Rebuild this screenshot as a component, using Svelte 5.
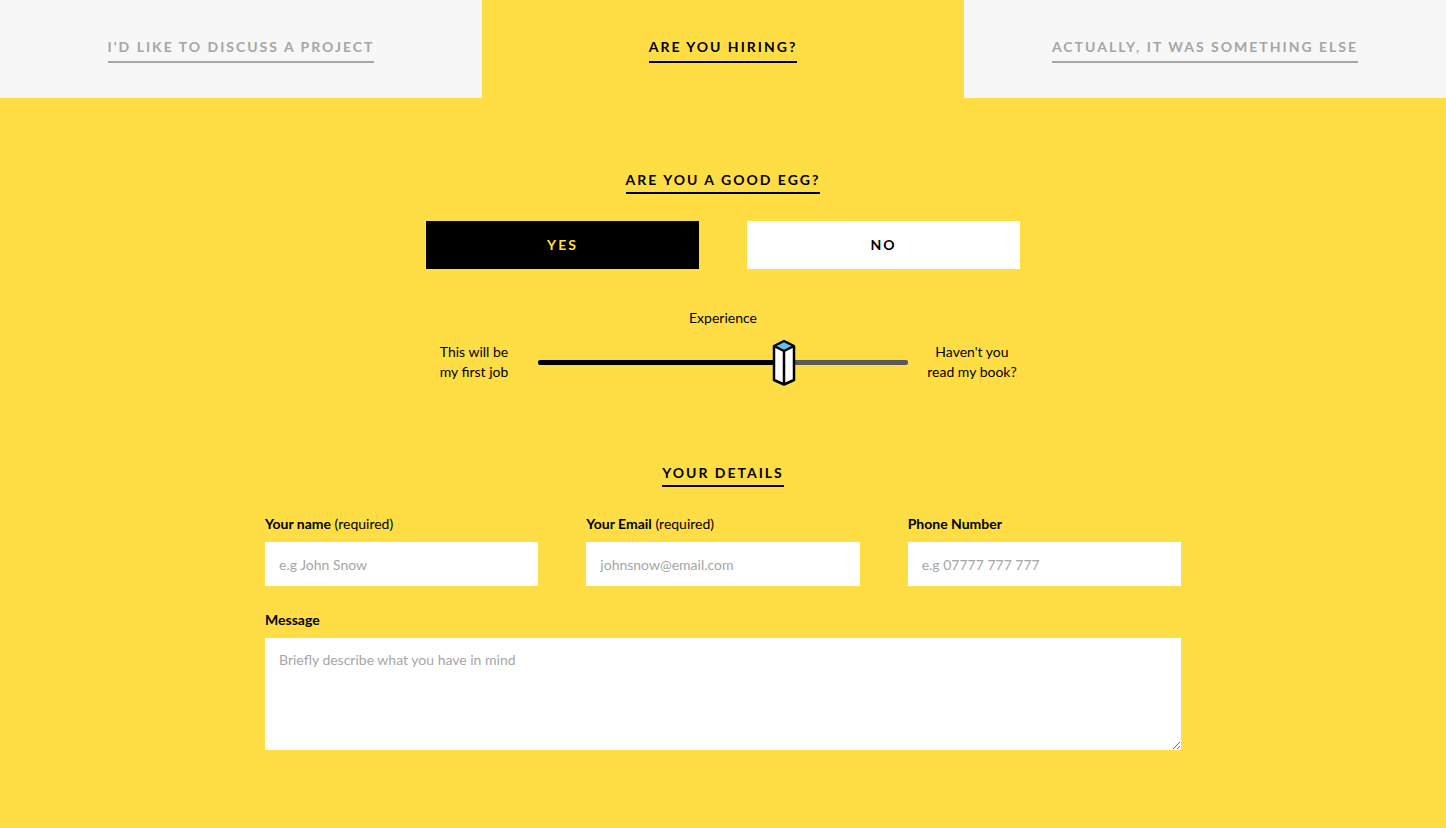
<script>
  const tabs = ["I'd like to discuss a project", 'Are you hiring?', 'Actually, it was something else'];
  const fields = [
    { id: 'name', label: 'Your name', required: true, type: 'text', placeholder: 'e.g John Snow' },
    { id: 'email', label: 'Your Email', required: true, type: 'email', placeholder: 'johnsnow@email.com' },
    { id: 'phone', label: 'Phone Number', required: false, type: 'tel', placeholder: 'e.g 07777 777 777' }
  ];
  let active = $state(1);
  let goodEgg = $state(true);
  let experience = $state(66);
</script>

<div class="page">
  <nav class="tabs">
    {#each tabs as tab, i}
      <button type="button" class="tab" class:active={active === i} onclick={() => (active = i)}>
        <span class="underlined">{tab}</span>
      </button>
    {/each}
  </nav>

  <form class="form" onsubmit={(e) => e.preventDefault()}>
    <section class="narrow">
      <h2 class="heading">Are you a good egg?</h2>
      <div class="choices">
        <button type="button" class="choice" class:selected={goodEgg} aria-pressed={goodEgg} onclick={() => (goodEgg = true)}>Yes</button>
        <button type="button" class="choice" class:selected={!goodEgg} aria-pressed={!goodEgg} onclick={() => (goodEgg = false)}>No</button>
      </div>

      <label class="experience" for="experience">Experience</label>
      <div class="scale">
        <span class="end">This will be<br />my first job</span>
        <div class="slider" style="--value: {experience}%">
          <input id="experience" type="range" min="0" max="100" bind:value={experience} />
          <svg class="thumb" viewBox="0 0 24 48" aria-hidden="true">
            <path d="M2 8 12 3 22 8V42L12 46.5 2 42Z" fill="#fff" />
            <path d="M2 8 12 3 22 8 12 13Z" fill="#5bc5ee" />
            <path d="M2 8 12 3 22 8V42L12 46.5 2 42ZM2 8 12 13 22 8M12 13V46.5" fill="none" stroke="#000" stroke-width="2.5" stroke-linejoin="round" />
          </svg>
        </div>
        <span class="end">Haven't you<br />read my book?</span>
      </div>
    </section>

    <section class="details">
      <h2 class="heading">Your details</h2>
      <div class="fields">
        {#each fields as field}
          <div class="field">
            <label for={field.id}><strong>{field.label}</strong>{#if field.required}{' '}(required){/if}</label>
            <input id={field.id} type={field.type} placeholder={field.placeholder} required={field.required} />
          </div>
        {/each}
        <div class="field wide">
          <label for="message"><strong>Message</strong></label>
          <textarea id="message" placeholder="Briefly describe what you have in mind"></textarea>
        </div>
      </div>
    </section>
  </form>
</div>

<style>
  :global(body) {
    margin: 0;
    background: #ffde45;
  }
  .page,
  .page button,
  .page input,
  .page textarea {
    font-family: Lato, sans-serif;
    font-size: 14px;
    line-height: 20px;
    color: #000;
  }
  .page * {
    box-sizing: border-box;
  }
  .page {
    min-height: 100vh;
    background: #ffde45;
  }
  .tabs {
    display: grid;
    grid-template-columns: repeat(3, 1fr);
  }
  .page .tab,
  .page .choice,
  .heading {
    font-size: 14px;
    font-weight: 700;
    line-height: 24px;
    letter-spacing: 2px;
    text-transform: uppercase;
  }
  .page .tab {
    padding: 35px 16px;
    border: 0;
    background: #f7f7f7;
    color: #a6a6a6;
    cursor: pointer;
  }
  .page .tab.active {
    background: #ffde45;
    color: #000;
  }
  .underlined {
    display: inline-block;
    padding-bottom: 2px;
    border-bottom: 2px solid;
  }
  .form {
    display: flex;
    flex-direction: column;
    align-items: center;
    gap: 71px;
    padding: 70px 24px 78px;
  }
  .narrow,
  .details {
    display: flex;
    flex-direction: column;
    align-items: center;
    width: 100%;
  }
  .narrow {
    max-width: 594px;
  }
  .details {
    max-width: 916px;
  }
  .heading {
    margin: 0;
    border-bottom: 2px solid #000;
  }
  .choices {
    display: grid;
    grid-template-columns: 1fr 1fr;
    gap: 48px;
    width: 100%;
    margin-top: 27px;
  }
  .page .choice {
    height: 48px;
    padding: 0;
    border: 0;
    background: #fff;
    cursor: pointer;
  }
  .page .choice.selected {
    background: #000;
    color: #ffde45;
  }
  .experience {
    margin-top: 39px;
  }
  .scale {
    display: grid;
    grid-template-columns: 96px 1fr 96px;
    gap: 16px;
    align-items: center;
    width: 100%;
    margin-top: 10px;
    padding-bottom: 4px;
  }
  .end {
    text-align: center;
    white-space: nowrap;
  }
  .slider {
    position: relative;
    height: 48px;
  }
  .slider input {
    appearance: none;
    display: block;
    width: 100%;
    height: 48px;
    margin: 0;
    background: transparent;
    cursor: pointer;
  }
  .slider input::-webkit-slider-runnable-track {
    height: 5px;
    border-radius: 2px;
    background: linear-gradient(to right, #000 var(--value), #58595b var(--value));
  }
  .slider input::-webkit-slider-thumb {
    appearance: none;
    width: 24px;
    height: 48px;
    margin-top: -22px;
    background: transparent;
  }
  .thumb {
    position: absolute;
    top: 0;
    left: var(--value);
    width: 24px;
    height: 48px;
    margin-left: -10px;
    pointer-events: none;
  }
  .fields {
    display: grid;
    grid-template-columns: repeat(3, 1fr);
    gap: 24px 48px;
    width: 100%;
    margin-top: 27px;
  }
  .field {
    display: flex;
    flex-direction: column;
    gap: 8px;
    min-width: 0;
  }
  .wide {
    grid-column: 1 / -1;
  }
  .field input,
  .field textarea {
    width: 100%;
    height: 44px;
    margin: 0;
    padding: 12px 14px;
    border: 0;
    border-radius: 0;
    background: #fff;
  }
  .field textarea {
    height: 112px;
    resize: vertical;
  }
  .field ::placeholder {
    color: #a6a6a6;
    opacity: 1;
  }
</style>
